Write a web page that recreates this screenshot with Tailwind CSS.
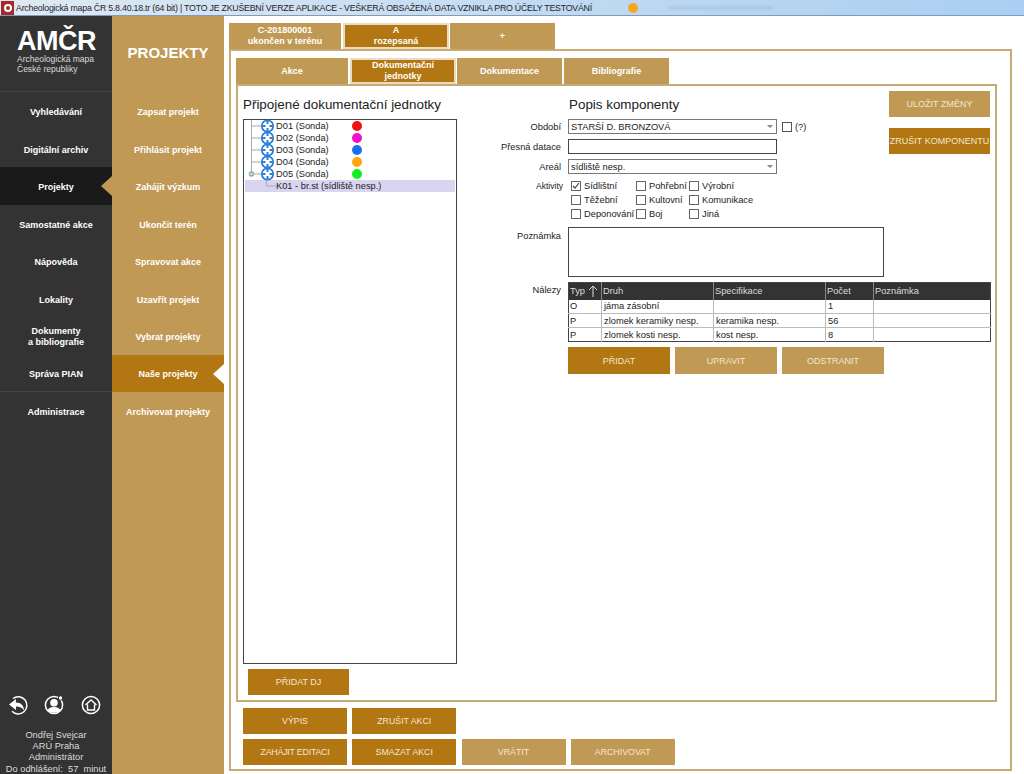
<!DOCTYPE html>
<html lang="en">
<head>
  <meta charset="UTF-8">
  <title>AMČR - Projekty</title>
  <script src="https://cdn.jsdelivr.net/npm/@tailwindcss/browser@4"></script>
</head>
<body class="h-[774px] w-[1024px] overflow-hidden bg-white font-['Liberation_Sans',Arial,sans-serif] text-[9.3px] leading-[12px] text-[#222]">

  <!-- icon used by the tree rows -->
  <svg class="hidden">
    <symbol id="node" viewBox="0 0 14 14">
      <circle cx="7" cy="7" r="5.7" fill="#fff" stroke="#2b7fd6" stroke-width="1.8"/>
      <path d="M7 2v3M7 9v3M2 7h3M9 7h3" stroke="#2b7fd6" stroke-width="2"/>
    </symbol>
  </svg>

  <!-- title bar -->
  <div class="relative flex h-4 items-center border-b border-[#7f9dbb] bg-gradient-to-r from-[#dfe9f2] via-[#c4dbf0] to-[#a9cff2]">
    <div class="ml-[1px] flex h-[14px] w-[13px] items-center justify-center bg-[#a5282a]">
      <div class="h-2 w-2 rounded-full border-2 border-white"></div>
    </div>
    <span class="ml-[2px] w-[577px] text-[8.8px] tracking-[-0.23px] whitespace-nowrap text-[#1b2530]">Archeologická mapa ČR 5.8.40.18.tr (64 bit) | TOTO JE ZKUŠEBNÍ VERZE APLIKACE - VEŠKERÁ OBSAŽENÁ DATA VZNIKLA PRO ÚČELY TESTOVÁNÍ</span>
    <div class="ml-[35px] h-[10px] w-[10px] rounded-full bg-[#f5a623]"></div>
    <div class="ml-[30px] h-[4px] w-[105px] bg-[#8fb2d6]/30 blur-[1px]"></div>
  </div>

  <div class="flex h-[758px]">
    <!-- dark sidebar -->
    <aside class="flex w-[112px] shrink-0 flex-col bg-[#333333] text-[9px] font-bold text-white">
      <div class="h-[76px] border-b border-[#444] pt-[12px] pl-[17px]">
        <div class="text-[27px] leading-[27px] tracking-[-0.5px]">AMČR</div>
        <div class="text-[8.5px] leading-[9.5px] font-normal text-[#ddd]">Archeologická mapa<br>České republiky</div>
      </div>
      <nav class="flex flex-col text-center">
        <a class="flex h-[37.5px] items-center justify-center pt-[3px]">Vyhledávání</a>
        <a class="flex h-[37.5px] items-center justify-center pt-[3px]">Digitální archiv</a>
        <a class="relative flex h-[37.5px] items-center justify-center bg-[#1a1a1a] pt-[3px]">Projekty
          <span class="absolute top-[9px] right-0 h-0 w-0 border-y-[10px] border-r-[11px] border-y-transparent border-r-[#c09a55]"></span>
        </a>
        <a class="flex h-[37.5px] items-center justify-center pt-[3px]">Samostatné akce</a>
        <a class="flex h-[37.5px] items-center justify-center pt-[3px]">Nápověda</a>
        <a class="flex h-[37.5px] items-center justify-center pt-[3px]">Lokality</a>
        <a class="flex h-[37.5px] items-center justify-center pt-[3px] leading-[11px]">Dokumenty<br>a bibliografie</a>
        <a class="flex h-[37.5px] items-center justify-center border-b border-[#444] pt-[3px]">Správa PIAN</a>
        <a class="flex h-[37.5px] items-center justify-center pt-[3px]">Administrace</a>
      </nav>
      <div class="mt-auto mb-[-1px] text-center text-[9.25px] font-normal text-[#ddd]">
        <div class="mr-[4px] flex items-center justify-center gap-[16.5px]">
          <svg class="h-5 w-5" viewBox="0 0 20 20"><path d="M5 3.500A8.600 8.600 0 1 1 4 16.200" fill="none" stroke="#fff" stroke-width="1.500"/><path d="M1 9.500 8 4v3.500c5 0 8 3 8 8-2-3-4-4-8-4V15z" fill="#fff"/></svg>
          <svg class="h-5 w-5" viewBox="0 0 20 20"><circle cx="10" cy="10" r="8.600" fill="none" stroke="#fff" stroke-width="1.500"/><circle cx="10" cy="7.800" r="3.800" fill="#fff"/><path d="M3.600 15.500c1-3 4-3.500 6.400-3.500s5.400.5 6.400 3.500c-3 3-9.800 3-12.800 0z" fill="#fff"/><circle cx="16.500" cy="3" r="2.200" fill="#fff" stroke="#333"/></svg>
          <svg class="h-5 w-5" viewBox="0 0 20 20"><circle cx="10" cy="10" r="8.600" fill="none" stroke="#fff" stroke-width="1.500"/><path d="M4.500 10 10 5l5.500 5M6.500 9.500V15h7V9.500" fill="none" stroke="#fff" stroke-width="1.400"/></svg>
        </div>
        <div class="mt-[15px] leading-[11.3px]">Ondřej Svejcar<br>ARÚ Praha<br>Administrátor<br><span class="whitespace-pre">Do odhlášení:  57  minut</span></div>
      </div>
    </aside>

    <!-- project menu -->
    <aside class="flex w-[112px] shrink-0 flex-col bg-[#c09a55] text-center text-[9px] font-bold text-white">
      <div class="h-[76px] pt-[27px] text-[15px] leading-[20px]">PROJEKTY</div>
      <nav class="flex flex-col">
        <a class="flex h-[37.5px] items-center justify-center pt-[3px]">Zapsat projekt</a>
        <a class="flex h-[37.5px] items-center justify-center pt-[3px]">Přihlásit projekt</a>
        <a class="flex h-[37.5px] items-center justify-center pt-[3px]">Zahájit výzkum</a>
        <a class="flex h-[37.5px] items-center justify-center pt-[3px]">Ukončit terén</a>
        <a class="flex h-[37.5px] items-center justify-center pt-[3px]">Spravovat akce</a>
        <a class="flex h-[37.5px] items-center justify-center pt-[3px]">Uzavřít projekt</a>
        <a class="flex h-[37.5px] items-center justify-center pt-[3px]">Vybrat projekty</a>
        <a class="relative flex h-[37.5px] items-center justify-center bg-[#b27712] pt-[2px]">Naše projekty
          <span class="absolute top-[9px] right-0 h-0 w-0 border-y-[10px] border-r-[11px] border-y-transparent border-r-white"></span>
        </a>
        <a class="flex h-[37.5px] items-center justify-center pt-[3px]">Archivovat projekty</a>
      </nav>
    </aside>

    <!-- main -->
    <main class="w-[788px] pt-[7px] pl-[5px]">
      <div class="flex h-[26px] text-center text-[9px] leading-[11px] font-bold text-white">
        <div class="flex w-[112px] items-center justify-center bg-[#c09a55]">C-201800001<br>ukončen v terénu</div>
        <div class="ml-[2px] flex w-[106px] items-center justify-center border-2 border-[#e9dcc0] bg-[#b27712]">A<br>rozepsaná</div>
        <div class="ml-[1px] flex w-[105px] items-center justify-center bg-[#c09a55]">+</div>
      </div>
      <div class="h-[722px] w-[783px] border-2 border-[#c8ab74] pt-[7px] pl-[5px]">
        <div class="flex h-[26px] text-center text-[9px] leading-[11px] font-bold text-white">
          <div class="flex w-[112px] items-center justify-center bg-[#c09a55]">Akce</div>
          <div class="ml-[2px] flex w-[106px] items-center justify-center border-2 border-[#e9dcc0] bg-[#b27712]">Dokumentační<br>jednotky</div>
          <div class="ml-[1px] flex w-[105px] items-center justify-center bg-[#c09a55]">Dokumentace</div>
          <div class="ml-[2px] flex w-[105px] items-center justify-center bg-[#c09a55]">Bibliografie</div>
        </div>
        <div class="flex h-[618px] w-[761px] border-2 border-[#c8ab74]">
          <!-- documentation units -->
          <section class="ml-[5px] w-[214px] shrink-0">
            <h2 class="mt-[11px] text-[13.4px] leading-[16px]">Připojené dokumentační jednotky</h2>
            <div class="mt-[6px] h-[545px] border border-[#444] pl-[1px]">
              <div class="flex h-3 items-center"><svg class="h-3 w-[31px] shrink-0 overflow-visible" viewBox="0 0 31 12"><path d="M6.500 0v12M6.500 6h10" stroke="#aaa" fill="none"/><use href="#node" x="15.500" y="-1" width="14" height="14"/></svg><span class="w-[76px]">D01 (Sonda)</span><span class="h-[10px] w-[10px] rounded-full bg-[#f40f0f]"></span></div>
              <div class="flex h-3 items-center"><svg class="h-3 w-[31px] shrink-0 overflow-visible" viewBox="0 0 31 12"><path d="M6.500 0v12M6.500 6h10" stroke="#aaa" fill="none"/><use href="#node" x="15.500" y="-1" width="14" height="14"/></svg><span class="w-[76px]">D02 (Sonda)</span><span class="h-[10px] w-[10px] rounded-full bg-[#f012c8]"></span></div>
              <div class="flex h-3 items-center"><svg class="h-3 w-[31px] shrink-0 overflow-visible" viewBox="0 0 31 12"><path d="M6.500 0v12M6.500 6h10" stroke="#aaa" fill="none"/><use href="#node" x="15.500" y="-1" width="14" height="14"/></svg><span class="w-[76px]">D03 (Sonda)</span><span class="h-[10px] w-[10px] rounded-full bg-[#1a6ff0]"></span></div>
              <div class="flex h-3 items-center"><svg class="h-3 w-[31px] shrink-0 overflow-visible" viewBox="0 0 31 12"><path d="M6.500 0v12M6.500 6h10" stroke="#aaa" fill="none"/><use href="#node" x="15.500" y="-1" width="14" height="14"/></svg><span class="w-[76px]">D04 (Sonda)</span><span class="h-[10px] w-[10px] rounded-full bg-[#ffa50f]"></span></div>
              <div class="flex h-3 items-center"><svg class="h-3 w-[31px] shrink-0 overflow-visible" viewBox="0 0 31 12"><path d="M6.500 0v6M6.500 6h10" stroke="#aaa" fill="none"/><circle cx="6.500" cy="6" r="2.800" fill="#8fa9b0"/><path d="M4.500 6h4" stroke="#fff"/><use href="#node" x="15.500" y="-1" width="14" height="14"/></svg><span class="w-[76px]">D05 (Sonda)</span><span class="h-[10px] w-[10px] rounded-full bg-[#12ee22]"></span></div>
              <div class="flex h-3 w-[210px] items-center bg-[#d9d5f1]"><svg class="h-3 w-[31px] shrink-0" viewBox="0 0 31 12"><path d="M21.500 0v6H31" stroke="#aaa" fill="none"/></svg><span>K01 - br.st (sídliště nesp.)</span></div>
            </div>
            <button class="mt-[5px] ml-[5px] h-[26px] w-[101px] bg-[#b27712] text-[9px] text-[#f3e6cf]">PŘIDAT DJ</button>
          </section>

          <!-- component detail -->
          <section class="ml-[33px] w-[501px] shrink-0">
            <div class="flex h-[191px]">
              <div class="w-[394px]">
                <h2 class="mt-[11px] ml-[79px] text-[13.4px] leading-[16px]">Popis komponenty</h2>
                <div class="mt-[6px] flex h-[15px] items-center">
                  <label class="w-[71px] text-right">Období</label>
                  <div class="ml-[7px] flex h-[15px] w-[209px] items-center justify-between border border-[#777] pr-[3px] pl-[2px]">STARŠÍ D. BRONZOVÁ<span class="h-0 w-0 border-x-[3px] border-t-[3px] border-x-transparent border-t-[#888]"></span></div>
                  <span class="ml-[5px] h-[10px] w-[10px] border border-[#555]"></span>
                  <span class="ml-[3px]">(?)</span>
                </div>
                <div class="mt-[5px] flex h-[15px] items-center">
                  <label class="w-[71px] text-right">Přesná datace</label>
                  <div class="ml-[7px] h-[15px] w-[209px] border border-[#444]"></div>
                </div>
                <div class="mt-[5px] flex h-[15px] items-center">
                  <label class="w-[71px] text-right">Areál</label>
                  <div class="ml-[7px] flex h-[15px] w-[209px] items-center justify-between border border-[#777] pr-[3px] pl-[2px]">sídliště nesp.<span class="h-0 w-0 border-x-[3px] border-t-[3px] border-x-transparent border-t-[#888]"></span></div>
                </div>
                <div class="mt-[5px] flex">
                  <label class="w-[73px] pt-[1px] text-right text-[8.5px]">Aktivity</label>
                  <div class="ml-[8px] grid grid-cols-[65px_53px_90px] auto-rows-[14px] items-center">
                    <div class="flex items-center gap-[3px]"><span class="flex h-[10px] w-[10px] items-center justify-center border border-[#666]"><svg class="h-[8px] w-[8px]" viewBox="0 0 8 8"><path d="M1 4l2 2 4-5" fill="none" stroke="#444" stroke-width="1.200"/></svg></span>Sídlištní</div>
                    <div class="flex items-center gap-[3px]"><span class="h-[10px] w-[10px] border border-[#666]"></span>Pohřební</div>
                    <div class="flex items-center gap-[3px]"><span class="h-[10px] w-[10px] border border-[#666]"></span>Výrobní</div>
                    <div class="flex items-center gap-[3px]"><span class="h-[10px] w-[10px] border border-[#666]"></span>Těžební</div>
                    <div class="flex items-center gap-[3px]"><span class="h-[10px] w-[10px] border border-[#666]"></span>Kultovní</div>
                    <div class="flex items-center gap-[3px]"><span class="h-[10px] w-[10px] border border-[#666]"></span>Komunikace</div>
                    <div class="flex items-center gap-[3px]"><span class="h-[10px] w-[10px] border border-[#666]"></span>Deponování</div>
                    <div class="flex items-center gap-[3px]"><span class="h-[10px] w-[10px] border border-[#666]"></span>Boj</div>
                    <div class="flex items-center gap-[3px]"><span class="h-[10px] w-[10px] border border-[#666]"></span>Jiná</div>
                  </div>
                </div>
                <div class="mt-[6px] flex">
                  <label class="w-[71px] pt-[3px] text-right">Poznámka</label>
                  <div class="ml-[7px] h-[50px] w-[316px] border border-[#444]"></div>
                </div>
              </div>
              <div class="ml-[5px] w-[101px] pt-[5px] text-[9px]">
                <button class="h-[26px] w-[101px] bg-[#c09a55] text-[#f3e6cf]">ULOŽIT ZMĚNY</button>
                <button class="mt-[11px] h-[26px] w-[101px] bg-[#b27712] whitespace-nowrap text-[#f3e6cf]">ZRUŠIT KOMPONENTU</button>
              </div>
            </div>
            <div class="mt-[5px] flex">
              <label class="w-[71px] pt-[2px] text-right">Nálezy</label>
              <div class="ml-[7px] w-[423px]">
                <table class="w-full table-fixed border-collapse border border-[#444]">
                  <colgroup><col class="w-[33px]"><col class="w-[112px]"><col class="w-[112px]"><col class="w-[48px]"><col></colgroup>
                  <thead class="bg-[#333] text-left text-[#ddd]">
                    <tr class="h-[17px]"><th class="border-r border-[#888] pl-[1px] font-normal"><span class="flex items-center gap-[3px]">Typ<svg class="h-[12px] w-[10px]" viewBox="0 0 10 12"><path d="M5 12V1M1 5l4-4 4 4" fill="none" stroke="#ddd"/></svg></span></th><th class="border-r border-[#888] pl-[1px] font-normal">Druh</th><th class="border-r border-[#888] pl-[1px] font-normal">Specifikace</th><th class="border-r border-[#888] pl-[1px] font-normal">Počet</th><th class="pl-[1px] font-normal">Poznámka</th></tr>
                  </thead>
                  <tbody>
                    <tr class="h-[14px] border-b border-[#bbb]"><td class="border-r border-[#bbb] pl-[1px]">O</td><td class="border-r border-[#bbb] pl-[2px]">jáma zásobní</td><td class="border-r border-[#bbb] pl-[2px]"></td><td class="border-r border-[#bbb] pl-[2px]">1</td><td></td></tr>
                    <tr class="h-[14px] border-b border-[#bbb]"><td class="border-r border-[#bbb] pl-[1px]">P</td><td class="border-r border-[#bbb] pl-[2px]">zlomek keramiky nesp.</td><td class="border-r border-[#bbb] pl-[2px]">keramika nesp.</td><td class="border-r border-[#bbb] pl-[2px]">56</td><td></td></tr>
                    <tr class="h-[14px]"><td class="border-r border-[#bbb] pl-[1px]">P</td><td class="border-r border-[#bbb] pl-[2px]">zlomek kosti nesp.</td><td class="border-r border-[#bbb] pl-[2px]">kost nesp.</td><td class="border-r border-[#bbb] pl-[2px]">8</td><td></td></tr>
                  </tbody>
                </table>
                <div class="mt-[5px] flex gap-[5px] text-[9px] text-[#f3e6cf]">
                  <button class="h-[27px] w-[102px] bg-[#b27712]">PŘIDAT</button>
                  <button class="h-[27px] w-[102px] bg-[#c09a55]">UPRAVIT</button>
                  <button class="h-[27px] w-[102px] bg-[#c09a55]">ODSTRANIT</button>
                </div>
              </div>
            </div>
          </section>
        </div>
        <!-- action buttons -->
        <div class="mt-[6px] ml-[7px] grid w-[432px] grid-cols-4 auto-rows-[26px] gap-x-[5px] gap-y-[5px] text-[8.8px] text-[#f3e6cf]">
          <button class="w-[104px] bg-[#b27712]">VÝPIS</button>
          <button class="w-[104px] bg-[#b27712]">ZRUŠIT AKCI</button>
          <span></span><span></span>
          <button class="w-[104px] bg-[#b27712] tracking-[-0.2px]">ZAHÁJIT EDITACI</button>
          <button class="w-[104px] bg-[#b27712]">SMAZAT AKCI</button>
          <button class="w-[104px] bg-[#c09a55]">VRÁTIT</button>
          <button class="w-[104px] bg-[#c09a55]">ARCHIVOVAT</button>
        </div>
      </div>
    </main>
  </div>
</body>
</html>
